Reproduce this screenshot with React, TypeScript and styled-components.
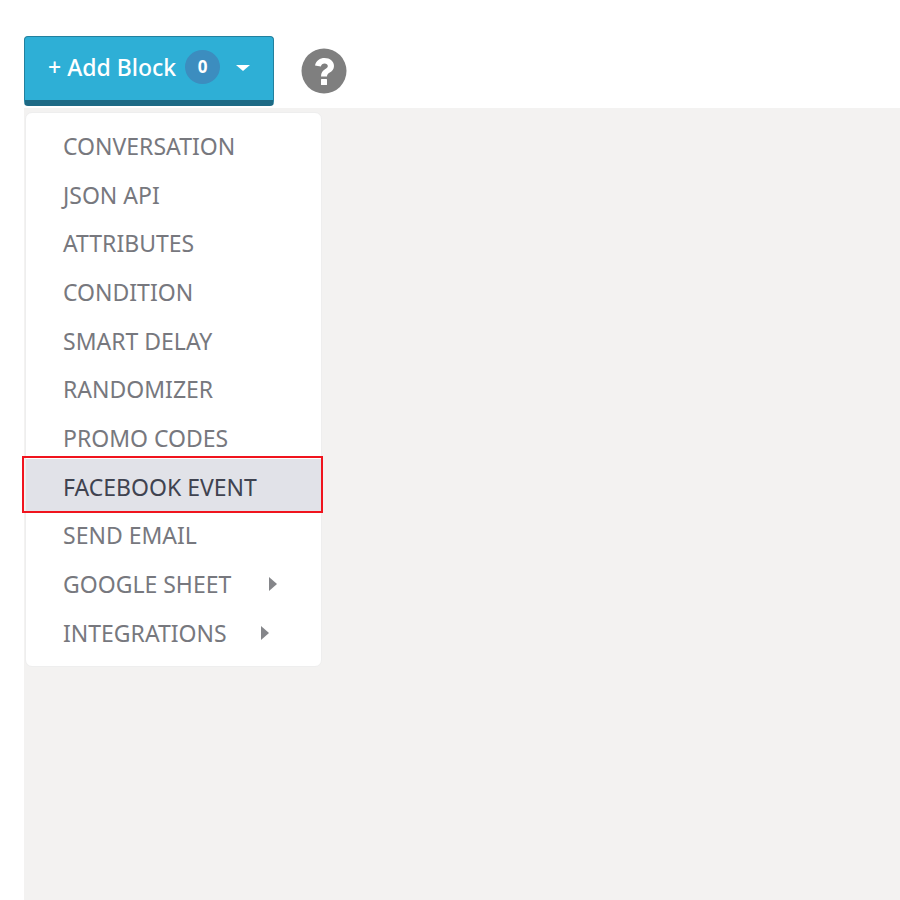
import styled, { createGlobalStyle } from 'styled-components';

const GlobalStyle = createGlobalStyle`
	html, body {
		margin: 0;
		padding: 0;
		height: 100%;
		background: #ffffff;
		font-family: 'Noto Sans', 'Open Sans', sans-serif;
	}
	#root {
		height: 100%;
	}
`;

const Page = styled.div`
	position: relative;
	display: flex;
	flex-direction: column;
	height: 900px;
	padding: 36px 0 0 24px;
	box-sizing: border-box;
	overflow: hidden;
`;

const Toolbar = styled.div`
	display: flex;
	align-items: flex-start;
	gap: 27px;
	height: 72px;
	flex: none;
`;

const AddButton = styled.button`
	display: flex;
	align-items: center;
	width: 250px;
	height: 70px;
	padding: 0 0 4px 23px;
	box-sizing: border-box;
	background: #2eafd6;
	border: 1px solid #22809e;
	border-bottom: 6px solid #1d6a85;
	border-radius: 4px;
	color: #ffffff;
	font-family: inherit;
	font-size: 23px;
	font-weight: 500;
`;

const Count = styled.span`
	display: flex;
	align-items: center;
	justify-content: center;
	width: 35px;
	height: 34px;
	margin-left: 9px;
	border-radius: 50%;
	background: #3c8dbf;
	font-size: 17px;
	font-weight: 700;
`;

const Caret = styled.span`
	width: 0;
	height: 0;
	margin-left: 16px;
	margin-top: 3px;
	border-left: 7px solid transparent;
	border-right: 7px solid transparent;
	border-top: 6px solid #ffffff;
`;

const HelpIcon = styled.svg`
	width: 46px;
	height: 46px;
	margin-top: 12px;
	flex: none;
`;

const Canvas = styled.div`
	flex: 1;
	background: #f3f2f1;
`;

const Menu = styled.ul`
	position: absolute;
	top: 112px;
	left: 25px;
	width: 297px;
	height: 555px;
	margin: 0;
	padding: 8.5px 0 0;
	box-sizing: border-box;
	list-style: none;
	background: #ffffff;
	border: 1px solid #eeeeee;
	border-radius: 7px;
`;

const Item = styled.li<{ $active?: boolean }>`
	position: relative;
	display: flex;
	align-items: center;
	height: 48.7px;
	padding-left: 37px;
	font-size: 23px;
	white-space: nowrap;
	color: ${({ $active }) => ($active ? '#3f4350' : '#77787e')};
	background: ${({ $active }) => ($active ? '#e1e2e8' : 'transparent')};
	box-shadow: ${({ $active }) => ($active ? '0 -3px 0 #e1e2e8' : 'none')};
`;

const Arrow = styled.span<{ $gap: number }>`
	width: 0;
	height: 0;
	margin-left: ${({ $gap }) => $gap}px;
	border-top: 7px solid transparent;
	border-bottom: 7px solid transparent;
	border-left: 8px solid #85868a;
`;

const Highlight = styled.div`
	position: absolute;
	top: -6px;
	left: -4px;
	right: -2px;
	bottom: -2px;
	border: 2px solid #f0141e;
	pointer-events: none;
`;

const items: { label: string; active?: boolean; arrowGap?: number }[] = [
	{ label: 'CONVERSATION' },
	{ label: 'JSON API' },
	{ label: 'ATTRIBUTES' },
	{ label: 'CONDITION' },
	{ label: 'SMART DELAY' },
	{ label: 'RANDOMIZER' },
	{ label: 'PROMO CODES' },
	{ label: 'FACEBOOK EVENT', active: true },
	{ label: 'SEND EMAIL' },
	{ label: 'GOOGLE SHEET', arrowGap: 38 },
	{ label: 'INTEGRATIONS', arrowGap: 34 },
];

const App = () => {
	return (
		<Page>
			<GlobalStyle />
			<Toolbar>
				<AddButton>
					+ Add Block
					<Count>0</Count>
					<Caret />
				</AddButton>
				<HelpIcon viewBox='0 0 46 46'>
					<circle cx='23' cy='23' r='22.5' fill='#7f7f7f' />
					<path
						d='M14 17.5c1-5 5-7.5 9.5-7.5 5.500 0 9.500 3.500 9.500 8 0 3.500-2 5.200-4.200 6.600-1.800 1.200-2.800 2-2.800 3.900h-6c0-4 1.700-5.800 4-7.300 1.700-1.100 2.800-1.900 2.800-3.200 0-1.500-1.400-2.600-3.200-2.600-2 0-3.200 1.100-3.800 3.200z'
						fill='#ffffff'
					/>
					<rect x='20' y='31' width='6' height='6' rx='0.500' fill='#ffffff' />
				</HelpIcon>
			</Toolbar>
			<Canvas />
			<Menu>
				{items.map(({ label, active, arrowGap }) => (
					<Item key={label} $active={active}>
						{label}
						{arrowGap && <Arrow $gap={arrowGap} />}
						{active && <Highlight />}
					</Item>
				))}
			</Menu>
		</Page>
	);
};

export default App;
